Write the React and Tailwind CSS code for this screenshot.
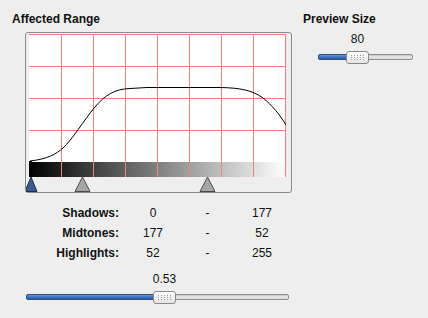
import React from 'react';

const rows = [
  { label: 'Shadows:', from: 0, to: 177 },
  { label: 'Midtones:', from: 177, to: 52 },
  { label: 'Highlights:', from: 52, to: 255 },
];

const markers = [
  { at: 31, half: 6, fill: '#3b5b8c', stroke: '#1c2c48' },
  { at: 82.5, half: 7.5, fill: '#a6a6a6', stroke: '#4a4a4a' },
  { at: 207.5, half: 7.5, fill: '#a6a6a6', stroke: '#4a4a4a' },
];

// plot area in page coords: x 29..286, y 34..177
const RangeChart = () => {
  const vLines = [61, 93, 125, 157, 189, 221, 253, 285];
  const hLines = [34, 66, 98, 130];
  return (
    <svg width="265" height="159" viewBox="26 33 265 159" className="block">
      <defs>
        <linearGradient id="ramp" x1="0" x2="1" y1="0" y2="0">
          <stop offset="0" stopColor="#000" />
          <stop offset="1" stopColor="#fff" />
        </linearGradient>
        <clipPath id="plot">
          <rect x="29" y="34" width="257" height="143" />
        </clipPath>
      </defs>
      <rect x="29" y="34" width="257" height="143" fill="#fff" />
      <rect x="29" y="162" width="257" height="15" fill="url(#ramp)" />
      <rect x="29" y="161" width="3" height="16" fill="#000" />
      {hLines.map((y) => (
        <line key={y} x1="29" x2="286" y1={y + 0.5} y2={y + 0.5} stroke="#f28282" />
      ))}
      {vLines.map((x) => (
        <line key={x} x1={x + 0.5} x2={x + 0.5} y1="34" y2="177" stroke="#f28282" />
      ))}
      <path
        clipPath="url(#plot)"
        d="M30,161 C48,159 56,154 63,148 C72,140 84,120 95,107 C105,95 115,89 130,88.5 L147,87.5 L221,87.5 C240,88 252,90 263,98 C272,105 280,115 286,125"
        fill="none"
        stroke="#000"
        strokeWidth="1"
      />
      {markers.map((m, i) => (
        <polygon
          key={i}
          points={`${m.at},177 ${m.at - m.half},191.5 ${m.at + m.half},191.5`}
          fill={m.fill}
          stroke={m.stroke}
          strokeWidth="1"
          strokeLinejoin="round"
        />
      ))}
    </svg>
  );
};

const Slider = ({ width, value, min, max, label }) => {
  const thumbW = 23;
  const left = Math.round(((value - min) / (max - min)) * (width - thumbW));
  return (
    <div>
      <div className="flex leading-[14px]">
        <div style={{ width: left }} />
        <div className="w-[23px] flex justify-center whitespace-nowrap">{label}</div>
      </div>
      <div className="relative h-[13px] mt-[5px]" style={{ width }}>
        <div className="absolute left-0 right-0 top-[3px] h-[6px] rounded-[2px] border border-[#8f8f8f] bg-gradient-to-b from-[#c4c4c4] via-[#ececec] to-[#d6d6d6]" />
        <div
          className="absolute left-0 top-[3px] h-[6px] rounded-l-[2px] border border-[#2f4f80] bg-gradient-to-b from-[#6d9ae0] via-[#3f72c4] to-[#2c5aa3]"
          style={{ width: left + 12 }}
        />
        <div
          className="absolute top-0 h-[13px] w-[23px] rounded-[3px] border border-[#8a8a8a] bg-gradient-to-b from-white to-[#e4e4e4] flex items-center justify-center"
          style={{ left }}
        >
          <div className="grid grid-cols-5 gap-x-[2px] gap-y-[1px]">
            {Array.from({ length: 15 }).map((_, i) => (
              <div key={i} className="w-px h-px bg-[#9c9c9c]" />
            ))}
          </div>
        </div>
      </div>
    </div>
  );
};

export default function App() {
  return (
    <div className="w-[428px] h-[318px] bg-[#eeeeee] flex text-[12px] text-[#111] font-['Liberation_Sans',Arial,sans-serif]">
      <div className="w-[303px] shrink-0">
        <div className="pt-[12px] ml-[12px] leading-[14px] font-bold">Affected Range</div>
        <div className="mt-[6px] ml-[25px] w-[267px] h-[161px] border border-[#8c8c8c] rounded-[3px]">
          <RangeChart />
        </div>
        <div className="mt-[10px]">
          {rows.map((r) => (
            <div key={r.label} className="flex leading-[20px]">
              <div className="w-[119px] text-right font-bold">{r.label}</div>
              <div className="w-[50px] ml-[9px] text-center">{r.from}</div>
              <div className="w-[59px] text-center">-</div>
              <div className="w-[50px] text-center">{r.to}</div>
            </div>
          ))}
        </div>
        <div className="mt-[9px] ml-[26px]">
          <Slider width={263} value={0.53} min={0} max={1} label="0.53" />
        </div>
      </div>
      <div className="flex-1">
        <div className="pt-[12px] leading-[14px] font-bold">Preview Size</div>
        <div className="mt-[6px] ml-[15px]">
          <Slider width={95} value={80} min={10} max={190} label="80" />
        </div>
      </div>
    </div>
  );
}
